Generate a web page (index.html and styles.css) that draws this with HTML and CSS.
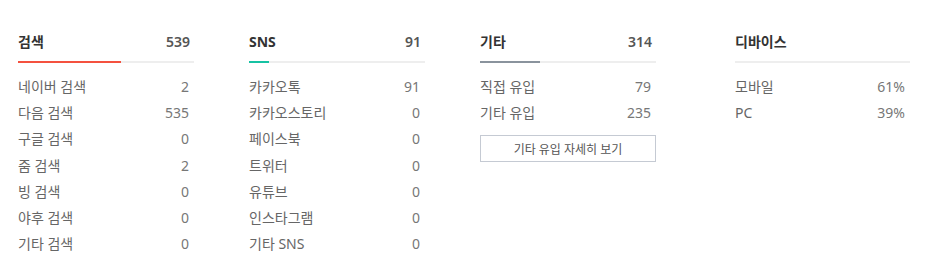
FILE: index.html
```html
<!DOCTYPE html>
<html lang="ko">
<head>
<meta charset="utf-8">
<link rel="stylesheet" href="styles.css">
</head>
<body>
<div class="stats">
  <section class="col">
    <div class="head"><span>검색</span><span class="num">539</span></div>
    <div class="bar"><div class="fill red" style="width:58.5%"></div></div>
    <ul class="rows">
      <li><span>네이버 검색</span><span class="num">2</span></li>
      <li><span>다음 검색</span><span class="num">535</span></li>
      <li><span>구글 검색</span><span class="num">0</span></li>
      <li><span>줌 검색</span><span class="num">2</span></li>
      <li><span>빙 검색</span><span class="num">0</span></li>
      <li><span>야후 검색</span><span class="num">0</span></li>
      <li><span>기타 검색</span><span class="num">0</span></li>
    </ul>
  </section>
  <section class="col">
    <div class="head"><span>SNS</span><span class="num">91</span></div>
    <div class="bar"><div class="fill teal" style="width:11.4%"></div></div>
    <ul class="rows">
      <li><span>카카오톡</span><span class="num">91</span></li>
      <li><span>카카오스토리</span><span class="num">0</span></li>
      <li><span>페이스북</span><span class="num">0</span></li>
      <li><span>트위터</span><span class="num">0</span></li>
      <li><span>유튜브</span><span class="num">0</span></li>
      <li><span>인스타그램</span><span class="num">0</span></li>
      <li><span>기타 SNS</span><span class="num">0</span></li>
    </ul>
  </section>
  <section class="col">
    <div class="head"><span>기타</span><span class="num">314</span></div>
    <div class="bar"><div class="fill slate" style="width:34%"></div></div>
    <ul class="rows">
      <li><span>직접 유입</span><span class="num">79</span></li>
      <li><span>기타 유입</span><span class="num">235</span></li>
    </ul>
    <button class="more" type="button">기타 유입 자세히 보기</button>
  </section>
  <section class="col col-device">
    <div class="head"><span>디바이스</span></div>
    <div class="bar"></div>
    <ul class="rows">
      <li><span>모바일</span><span class="num">61%</span></li>
      <li><span>PC</span><span class="num">39%</span></li>
    </ul>
  </section>
</div>
</body>
</html>
```

FILE: styles.css
```css
* { box-sizing: border-box; }
html, body { margin: 0; padding: 0; background: #fff; }
body {
  font-family: "Noto Sans", "Noto Sans CJK KR", sans-serif;
  font-size: 14px;
  color: #666;
}
.stats {
  display: flex;
  align-items: flex-start;
  padding: 32px 0 0 18px;
}
.col {
  width: 176px;
  margin-right: 55px;
}
.col-device {
  margin-left: 24px;
  width: 175px;
  margin-right: 0;
}
.head {
  display: flex;
  justify-content: space-between;
  height: 20px;
  line-height: 20px;
  padding-right: 4px;
  font-weight: bold;
  color: #333;
  font-size: 14px;
}
.bar {
  margin-top: 9px;
  height: 2px;
  background: #eeeeee;
}
.fill { height: 2px; }
.red { background: #f4513f; }
.teal { background: #16c2a3; }
.slate { background: #8a939d; }
.rows {
  list-style: none;
  margin: 11px 0 0;
  padding: 0;
}
.rows li {
  display: flex;
  justify-content: space-between;
  height: 26.2px;
  line-height: 26px;
  padding-right: 5px;
}
.num { color: #777; }
.head .num { color: #555; font-weight: 600; }
.more {
  display: block;
  width: 176px;
  height: 27px;
  margin-top: 9px;
  border: 1px solid #c5cad3;
  background: #fff;
  font-family: "Noto Sans", "Noto Sans CJK KR", sans-serif;
  font-size: 12px;
  color: #555;
  padding: 0;
  cursor: pointer;
}
```
